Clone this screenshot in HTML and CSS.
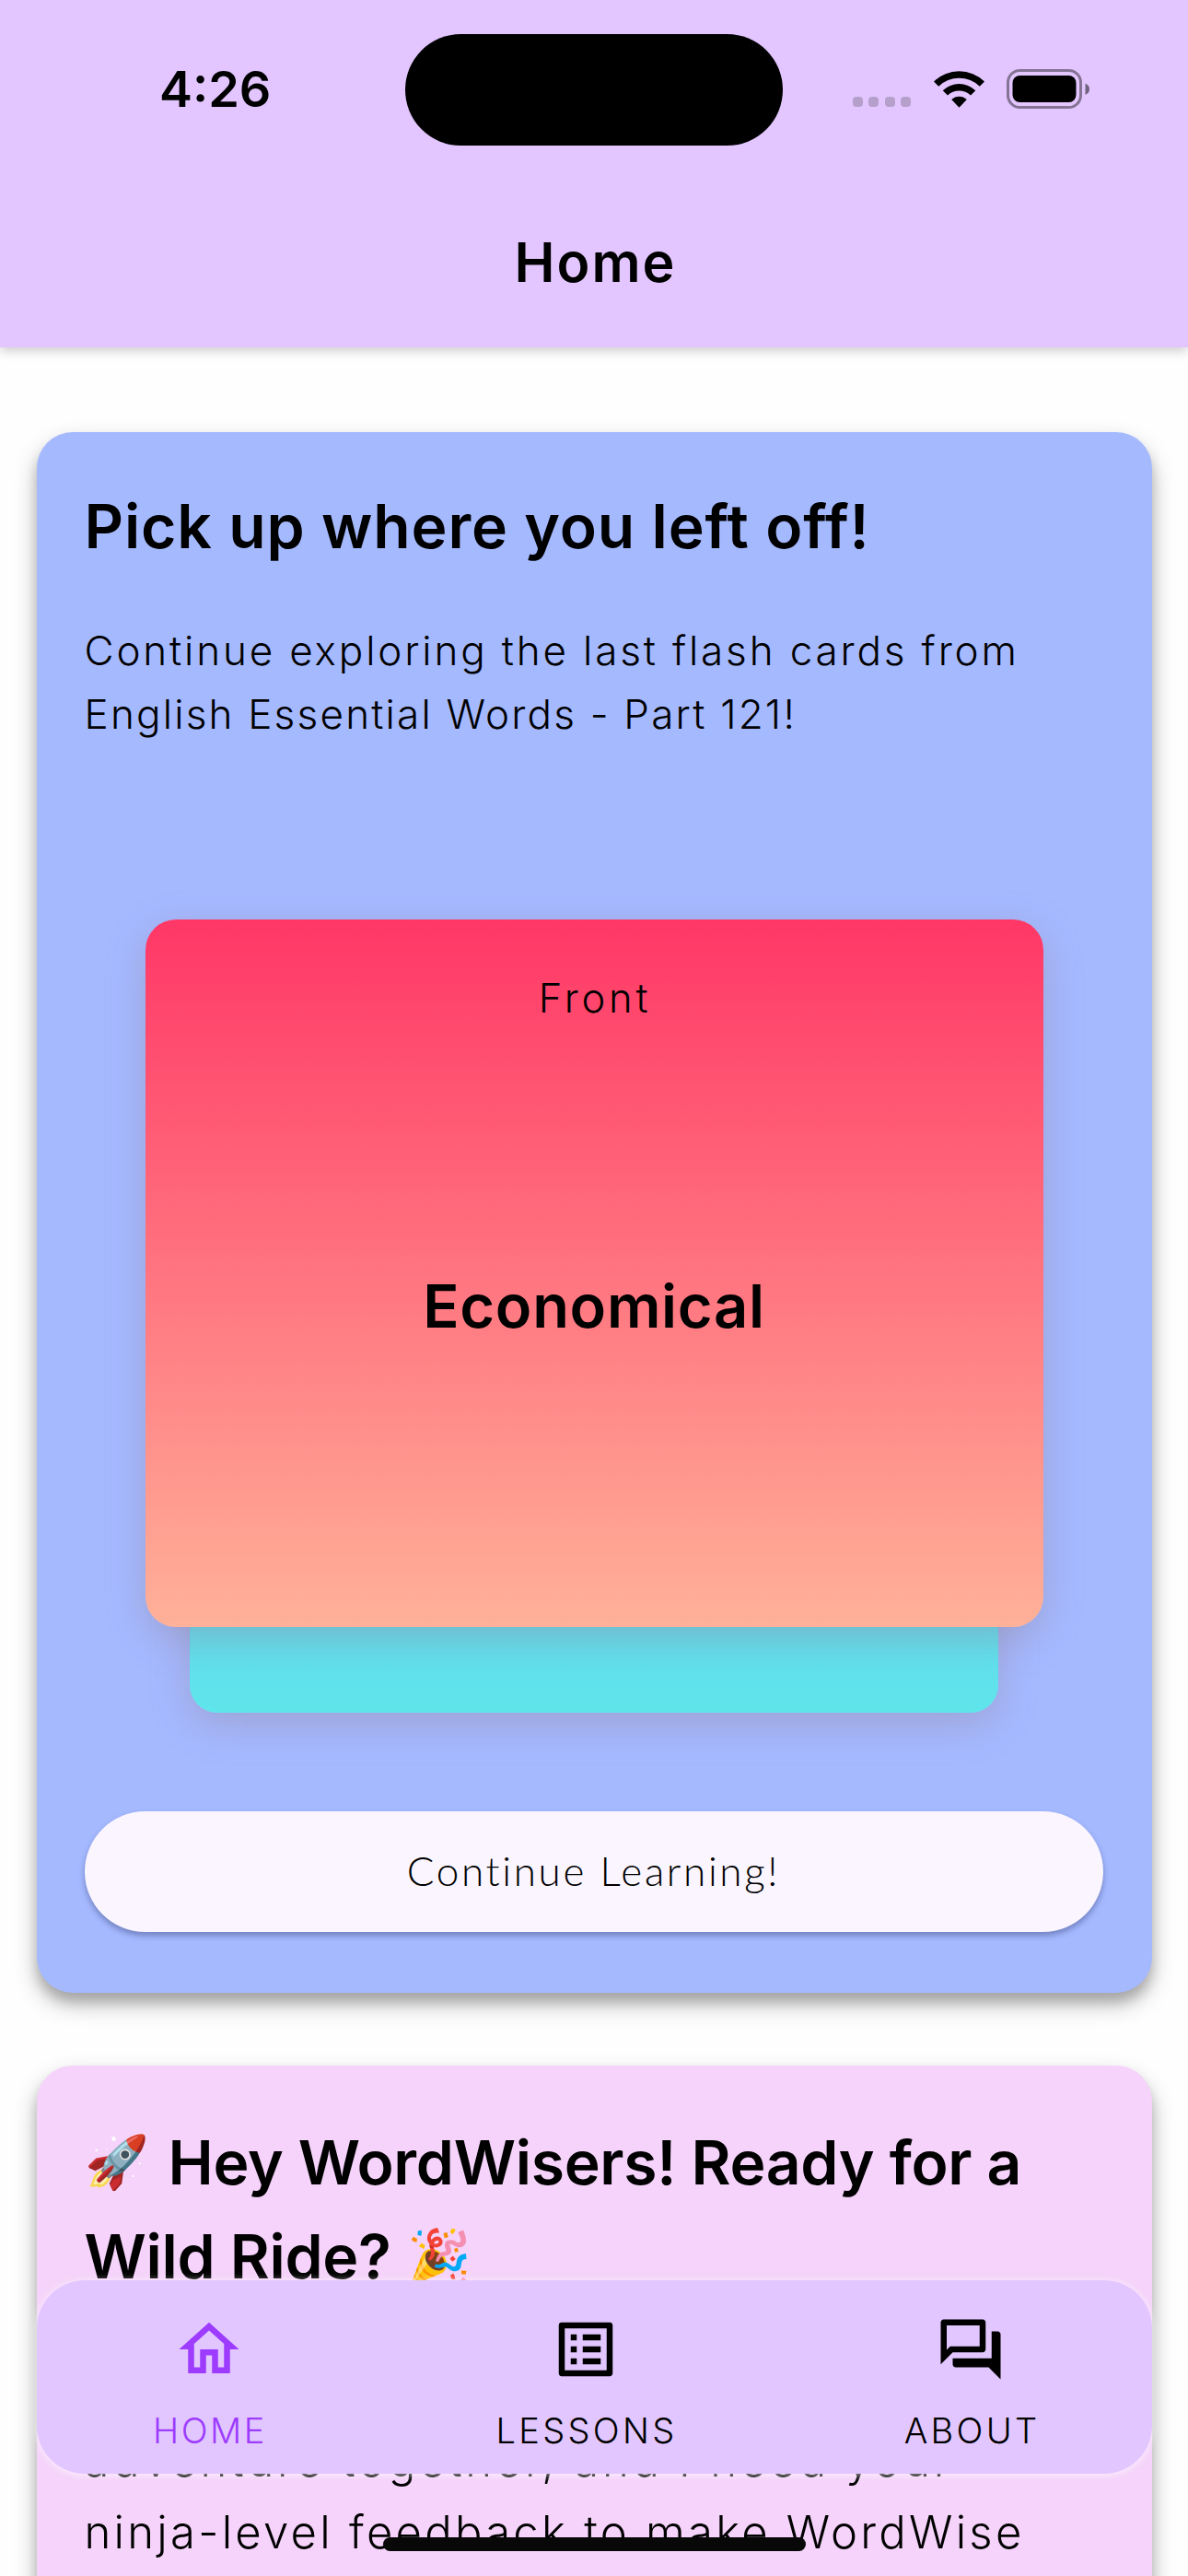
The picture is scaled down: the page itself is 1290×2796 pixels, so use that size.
FILE: index.html
```html
<!DOCTYPE html>
<html lang="en">
<head>
<meta charset="utf-8">
<title>WordWise</title>
<link rel="stylesheet" href="styles.css">
</head>
<body>
<div class="screen">
  <header class="header">
    <div class="status">
      <span class="time">4:26</span>
      <span class="island"></span>
      <div class="indicators">
        <div class="dots"><i></i><i></i><i></i><i></i></div>
        <svg class="wifi" viewBox="0 0 55 42" width="55" height="42">
          <path d="M0 12.5A39.500 39.500 0 0 1 55 12.500L49.800 17.700A32 32 0 0 0 5.200 17.700Z"/>
          <path d="M9.700 22.300A25.500 25.500 0 0 1 45.300 22.300L40 27.600A18 18 0 0 0 15 27.600Z"/>
          <path d="M19.200 32A12 12 0 0 1 35.800 32L27.500 40.700Z"/>
        </svg>
        <svg class="battery" viewBox="0 0 91 44" width="91" height="44">
          <rect x="1.500" y="1.500" width="79" height="40" rx="13" fill="none" stroke="#000" stroke-opacity=".42" stroke-width="3"/>
          <rect x="6.500" y="7" width="69" height="29" rx="8"/>
          <path d="M85.500 15.500Q90 17.500 90 21.800T85.500 28Z" fill-opacity=".5"/>
        </svg>
      </div>
    </div>
    <h1 class="page-title">Home</h1>
  </header>

  <main class="content">
    <section class="card card-resume">
      <h2 class="card-title">Pick up where you left off!</h2>
      <p class="card-text"><span class="line-a">Continue exploring the last flash cards from</span><br><span class="line-b">English Essential Words - Part 121!</span></p>
      <div class="deck">
        <div class="flash flash-back"></div>
        <div class="flash flash-front">
          <span class="side">Front</span>
          <span class="word">Economical</span>
        </div>
      </div>
      <button class="continue">Continue Learning!</button>
    </section>

    <section class="card card-news">
      <h2 class="news-title"><span class="emoji rocket">🚀</span><span>Hey WordWisers! Ready for a</span><br><span>Wild Ride?</span><span class="emoji party">🎉</span></h2>
      <p class="news-text"><span class="line-a">adventure together, and I need your</span><br><span class="line-b">ninja-level feedback to make WordWise</span></p>
    </section>
  </main>

  <nav class="tabs">
    <a class="tab tab-home active">
      <svg viewBox="0 0 24 24"><path d="M12 5.690l5 4.500V18h-2v-6H9v6H7v-7.810l5-4.500M12 3L2 12h3v8h6v-6h2v6h6v-8h3L12 3z"/></svg>
      <span>HOME</span>
    </a>
    <a class="tab tab-lessons">
      <svg viewBox="0 0 24 24"><path d="M11 7h6v2h-6zm0 4h6v2h-6zm0 4h6v2h-6zM7 7h2v2H7zm0 4h2v2H7zm0 4h2v2H7zM20.100 3H3.900c-.5 0-.9.4-.9.9v16.200c0 .4.4.9.9.9h16.200c.4 0 .9-.5.9-.9V3.900c0-.5-.5-.9-.9-.9zM19 19H5V5h14v14z"/></svg>
      <span>LESSONS</span>
    </a>
    <a class="tab tab-about">
      <svg viewBox="0 0 24 24"><path d="M15 4v7H5.170L4 12.170V4h11m1-2H3c-.55 0-1 .45-1 1v14l4-4h10c.55 0 1-.45 1-1V3c0-.55-.45-1-1-1zm5 4h-2v9H6v2c0 .55.45 1 1 1h11l4 4V7c0-.55-.45-1-1-1z"/></svg>
      <span>ABOUT</span>
    </a>
  </nav>
  <div class="home-indicator"></div>
</div>
</body>
</html>
```
FILE: styles.css
```css
* { box-sizing: border-box; margin: 0; padding: 0; }

body { background: #fff; }

.screen {
  position: relative;
  width: 1290px;
  height: 2796px;
  overflow: hidden;
  background: #fefefe;
  color: #000;
  font-family: Inter, "Noto Sans", sans-serif;
  white-space: nowrap;
}

/* Header */
.header {
  height: 377px;
  padding-top: 36.5px;
  background: #e3c6ff;
  box-shadow: 0 3px 12px rgba(0, 0, 0, .22);
}

.status {
  display: grid;
  grid-template-columns: 440px 410px 440px;
  align-items: center;
  height: 121.5px;
}

.time {
  padding-left: 173px;
  font-size: 54px;
  font-weight: 600;
  line-height: 64px;
  letter-spacing: 0;
}

.island { height: 121.5px; border-radius: 61px; background: #000; }

.indicators {
  display: flex;
  align-items: center;
  padding-left: 75.5px;
}

.dots {
  display: flex;
  gap: 6.500px;
  align-self: flex-end;
  padding-bottom: 3px;
}

.dots i { width: 11px; height: 11px; border-radius: 4px; background: #b59fcb; }

.wifi { margin-left: 25px; }
.battery { margin-left: 24px; }

.page-title {
  margin-top: 87px;
  padding-left: 3px;
  font-size: 59px;
  font-weight: 600;
  line-height: 80px;
  letter-spacing: 2px;
  text-align: center;
}

/* Cards */
.content {
  display: flex;
  flex-direction: column;
  gap: 79px;
  padding: 92px 39.5px 0;
}

.card {
  padding: 0 52px;
  border-radius: 39px;
  box-shadow: 0 12px 24px rgba(0, 0, 0, .28), 0 10px 12px rgba(0, 0, 0, .14);
}

.card-resume {
  height: 1693.5px;
  padding-top: 62px;
  background: #a5b9ff;
}

.card-title {
  font-size: 66px;
  font-weight: 600;
  line-height: 80px;
  letter-spacing: .85px;
}

.card-text {
  margin-top: 61px;
  font-size: 44px;
  font-weight: 300;
  line-height: 69px;
}

.card-text .line-a { letter-spacing: 2.85px; }
.card-text .line-b { letter-spacing: 2.2px; }

.deck {
  display: grid;
  width: 975px;
  height: 861px;
  margin: 188px auto 0;
}

.flash {
  grid-area: 1 / 1;
  border-radius: 33px;
  box-shadow: 0 12px 40px rgba(145, 130, 150, .4);
}

.flash-back {
  align-self: end;
  justify-self: center;
  width: 878px;
  height: 690px;
  border-radius: 30px;
  background: linear-gradient(#63a4ff, #60e5eb);
}

.flash-front {
  display: flex;
  flex-direction: column;
  align-items: center;
  height: 768px;
  padding-top: 55px;
  background: linear-gradient(#ff3766, #ffb199);
}

.side {
  padding-left: 2px;
  font-size: 43.5px;
  font-weight: 300;
  line-height: 60px;
  letter-spacing: 3.8px;
}

.word {
  margin-top: 264.5px;
  font-size: 65px;
  font-weight: 600;
  line-height: 80px;
  letter-spacing: .7px;
}

.continue {
  display: block;
  width: 1106px;
  height: 131px;
  margin-top: 107px;
  padding-bottom: 3px;
  border: 0;
  border-radius: 66px;
  background: #faf5ff;
  box-shadow: 0 4px 6px rgba(40, 50, 100, .4);
  color: #000;
  font: 300 44px Lato, Inter, sans-serif;
  letter-spacing: 2.65px;
}

.card-news {
  height: 900px;
  padding-top: 54px;
  background: #f5d3fa;
}

.news-title {
  font-size: 66px;
  font-weight: 600;
  line-height: 102px;
  letter-spacing: -.3px;
}

.emoji {
  display: inline-block;
  height: 102px;
  font-size: 56px;
  line-height: 101px;
  vertical-align: top;
}

.rocket { width: 91px; }
.party { margin-left: 17px; }

.news-text {
  margin-top: 132px;
  font-size: 49px;
  font-weight: 300;
  line-height: 78px;
}

.news-text .line-a { letter-spacing: 3.7px; }
.news-text .line-b { letter-spacing: 3.25px; }

/* Floating tab bar */
.tabs {
  position: absolute;
  top: 2474.5px;
  left: 39.5px;
  display: flex;
  justify-content: space-around;
  width: 1211px;
  height: 210px;
  padding-top: 36px;
  border-radius: 52px;
  background: #e2c6ff;
  box-shadow: 0 1px 9px rgba(255, 255, 255, .75);
}

.tab {
  display: flex;
  flex-direction: column;
  align-items: center;
  font-size: 38px;
  font-weight: 300;
}

.tab svg { width: 78px; height: 78px; fill: currentColor; }
.tab span { margin-top: 25px; padding-left: 3px; line-height: 48px; }

.tab-home { width: 123px; letter-spacing: 2.500px; }
.tab-lessons { width: 193px; letter-spacing: 3.3px; }
.tab-about { width: 142px; letter-spacing: 3.3px; }
.active { color: #9d3bff; }

.home-indicator {
  position: absolute;
  top: 2754px;
  left: 416px;
  width: 459px;
  height: 15px;
  border-radius: 8px;
  background: #080808;
}
```
